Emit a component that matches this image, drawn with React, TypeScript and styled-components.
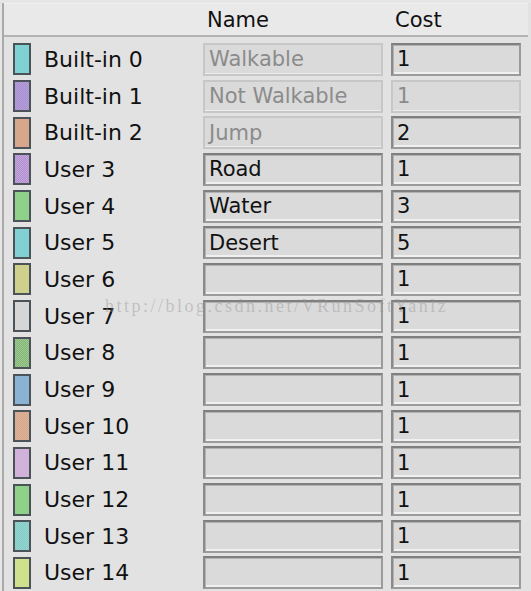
import React from "react";
import styled, { createGlobalStyle, css } from "styled-components";

const GlobalStyle = createGlobalStyle`
  html, body { margin: 0; padding: 0; background: #e3e3e3; }
  body { font-family: "DejaVu Sans", "Liberation Sans", sans-serif; }
`;

const Panel = styled.div`
  position: relative;
  width: 531px;
  height: 591px;
  overflow: hidden;
  box-sizing: border-box;
  padding: 3px 0 0 2px;
  background: #e6e6e6;
`;

const Frame = styled.div`
  height: 100%;
  border-left: 2px solid #a9a9a9;
  background: #e2e2e2;
`;

const Grid = css`
  display: grid;
  grid-template-columns: 191px 180px 130px;
  column-gap: 8px;
`;

const Header = styled.div`
  ${Grid};
  height: 31px;
  align-items: center;
  border-top: 1px dotted #f6f6f6;
  border-bottom: 2px solid #b3b3b3;
  background: #e9e9e9;
  margin-right: 3px;
`;

const HeadCell = styled.div`
  padding-left: 4px;
  font-size: 21px;
  color: #111;
`;

const Body = styled.div`
  padding-top: 4px;
`;

const Row = styled.div`
  ${Grid};
  height: 36.7px;
  align-items: center;
`;

const LabelCell = styled.div`
  display: flex;
  align-items: center;
  gap: 13px;
  padding-left: 9px;
`;

const Swatch = styled.div<{ $c: string; $c2?: string }>`
  width: 18px;
  height: 32px;
  flex: none;
  box-sizing: border-box;
  border: 2px solid #4b5359;
  background: ${(p) =>
    p.$c2
      ? `repeating-conic-gradient(${p.$c} 0 25%, ${p.$c2} 0 50%) 0 0 / 2px 2px`
      : p.$c};
`;

const Label = styled.span`
  font-size: 22px;
  color: #111;
  white-space: nowrap;
`;

const Field = styled.div<{ $disabled?: boolean }>`
  height: 33px;
  box-sizing: border-box;
  display: flex;
  align-items: center;
  padding-left: 4px;
  font-size: 21px;
  white-space: nowrap;
  overflow: hidden;
  background: #dadada;
  ${(p) =>
    p.$disabled
      ? css`
          color: #8b8b8b;
          border: 2px solid #c7c7c7;
          box-shadow: inset 0 -1px 0 #ececec;
        `
      : css`
          color: #111;
          border: 2px solid #9b9b9b;
          border-top-color: #7f7f7f;
          border-left-color: #8a8a8a;
          box-shadow: inset 1px 1px 0 #b2b2b2, inset 0 -2px 0 #f0f0f0;
        `}
`;

const Watermark = styled.div`
  position: absolute;
  left: 105px;
  top: 295px;
  font-family: "Liberation Serif", "DejaVu Serif", serif;
  font-size: 18px;
  letter-spacing: 2.5px;
  line-height: 22px;
  color: rgba(150, 150, 150, 0.45);
  pointer-events: none;
  white-space: nowrap;
`;

type RowData = {
  label: string;
  color: string;
  color2?: string;
  name: string;
  nameDisabled?: boolean;
  cost: string;
  costDisabled?: boolean;
};

const rows: RowData[] = [
  { label: "Built-in 0", color: "#7fd1d4", name: "Walkable", nameDisabled: true, cost: "1" },
  { label: "Built-in 1", color: "#a690d2", color2: "#b49fd8", name: "Not Walkable", nameDisabled: true, cost: "1", costDisabled: true },
  { label: "Built-in 2", color: "#d7a68b", name: "Jump", nameDisabled: true, cost: "2" },
  { label: "User 3", color: "#b08ed0", color2: "#c3a6dc", name: "Road", cost: "1" },
  { label: "User 4", color: "#8fd08a", name: "Water", cost: "3" },
  { label: "User 5", color: "#80d0d4", name: "Desert", cost: "5" },
  { label: "User 6", color: "#cfd08c", name: "", cost: "1" },
  { label: "User 7", color: "#d6d6d6", name: "", cost: "1" },
  { label: "User 8", color: "#88b07c", color2: "#9ad08c", name: "", cost: "1" },
  { label: "User 9", color: "#8ab2d2", name: "", cost: "1" },
  { label: "User 10", color: "#d6a68c", color2: "#dcb49a", name: "", cost: "1" },
  { label: "User 11", color: "#d2b2da", name: "", cost: "1" },
  { label: "User 12", color: "#90d18a", name: "", cost: "1" },
  { label: "User 13", color: "#80ccd6", color2: "#98d4c0", name: "", cost: "1" },
  { label: "User 14", color: "#d0e18e", name: "", cost: "1" },
];

export default function App() {
  return (
    <>
      <GlobalStyle />
      <Panel>
        <Frame>
          <Header>
            <HeadCell />
            <HeadCell>Name</HeadCell>
            <HeadCell>Cost</HeadCell>
          </Header>
          <Body>
            {rows.map((r) => (
              <Row key={r.label}>
                <LabelCell>
                  <Swatch $c={r.color} $c2={r.color2} />
                  <Label>{r.label}</Label>
                </LabelCell>
                <Field $disabled={r.nameDisabled}>{r.name}</Field>
                <Field $disabled={r.costDisabled}>{r.cost}</Field>
              </Row>
            ))}
          </Body>
        </Frame>
        <Watermark>http://blog.csdn.net/VRunSoftYanlz</Watermark>
      </Panel>
    </>
  );
}
